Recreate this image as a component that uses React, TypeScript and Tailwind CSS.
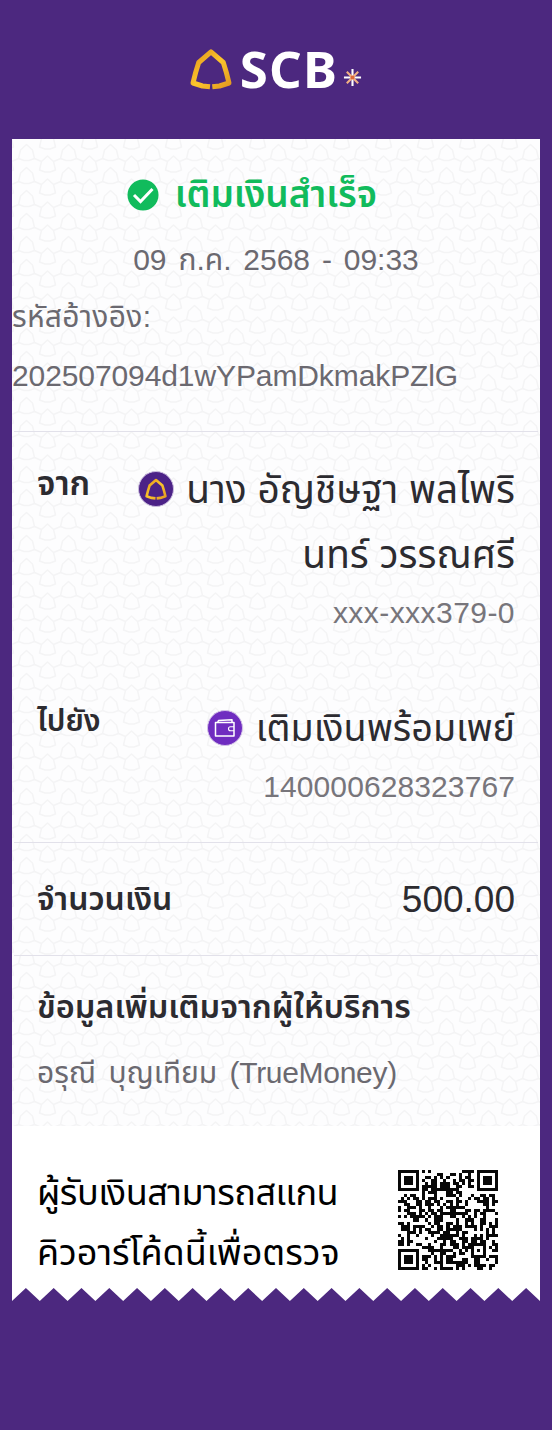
import type { ReactNode } from 'react'

const TEETH = 19
const QR_SIZE = 33

// ─── QR pattern ───────────────────────────────────────────────────────────────

function finderCell(x: number, y: number): boolean | null {
  const origins = [[0, 0], [QR_SIZE - 7, 0], [0, QR_SIZE - 7]]
  for (const [ox, oy] of origins) {
    const dx = x - ox
    const dy = y - oy
    if (dx < -1 || dy < -1 || dx > 7 || dy > 7) continue
    const d = Math.max(Math.abs(dx - 3), Math.abs(dy - 3))
    return d === 3 || d <= 1
  }
  const a = Math.max(Math.abs(x - 26), Math.abs(y - 26))
  if (a <= 2) return a !== 1
  return null
}

function qrPath(): string {
  let seed = 20257
  let d = ''
  for (let y = 0; y < QR_SIZE; y++) {
    for (let x = 0; x < QR_SIZE; x++) {
      seed = (seed * 1103515245 + 12345) % 2147483648
      const on = finderCell(x, y) ?? seed / 2147483648 < 0.5
      if (on) d += `M${x} ${y}h1v1h-1z`
    }
  }
  return d
}

function QrCode() {
  return (
    <svg viewBox="0 0 33 33" className="h-[100px] w-[100px] shrink-0" shapeRendering="crispEdges">
      <path d={qrPath()} fill="#080808" />
    </svg>
  )
}

// ─── Icons ────────────────────────────────────────────────────────────────────

function Leaf({ className }: { className: string }) {
  return (
    <svg viewBox="0 0 42 42" className={className} fill="none">
      <defs>
        <linearGradient id="gold" x1="0" y1="0" x2="1" y2="1">
          <stop offset="0" stopColor="#e2951c" />
          <stop offset=".5" stopColor="#fcc52c" />
          <stop offset="1" stopColor="#e39a20" />
        </linearGradient>
      </defs>
      <path
        d="M20 38.800L12.500 38L3 35Q5.500 24 8.700 14.500L21 3.800L33.300 14.500Q36.500 24 39 35L29.500 38L22.300 38.800"
        stroke="url(#gold)"
        strokeWidth="5"
        strokeLinejoin="round"
      />
    </svg>
  )
}

function Spark() {
  return (
    <svg viewBox="0 0 20 20" className="mt-[20px] ml-[5px] h-[19px] w-[19px]" strokeWidth="2.200">
      <path d="M10 1v18M1 10h18" stroke="#fff" />
      <path d="m4 4 12 12M16 4 4 16" stroke="#f3b183" />
      <circle cx="10" cy="10" r="2.200" fill="#dc6738" />
    </svg>
  )
}

function WalletBadge() {
  return (
    <svg viewBox="0 0 36 36" className="h-9 w-9 shrink-0" fill="none">
      <circle cx="18" cy="18" r="17.500" fill="#6f2cc0" stroke="#d3c2e6" />
      <path
        d="M8.500 12.500h18.500v13.500H8.500zM10.500 12.500l1-2 13.500-.8v2.800"
        stroke="#fff"
        strokeWidth="1.500"
        strokeLinejoin="round"
      />
      <path d="M27 16.800h-3.500q-2 0-2 2t2 2H27" stroke="#fff" strokeWidth="1.100" />
    </svg>
  )
}

function Pattern() {
  return (
    <svg className="absolute top-0 left-0 h-[987px] w-full" fill="none">
      <defs>
        <pattern id="leaves" x="4" y="3" width="42" height="23" patternUnits="userSpaceOnUse">
          <g stroke="#f4f4f5" strokeWidth="1.500" strokeLinejoin="round">
            <path d="M2.500 16.500L4.500 8 10.500 2.500 16.500 8l2 8.500-5.500 2H8zM23.500 5l2-8.500L31.500-9l6 5.500 2 8.500-5.500 2h-5zM23.500 28l2-8.500 6-5.500 6 5.500 2 8.500-5.500 2h-5z" />
            <path d="m18.500 16.500 7 3M37.500 19.500l7-3M-4.500 19.500l7-3" />
          </g>
        </pattern>
      </defs>
      <rect width="100%" height="100%" fill="#fdfdfe" />
      <rect width="100%" height="100%" fill="url(#leaves)" />
    </svg>
  )
}

// ─── Slip ─────────────────────────────────────────────────────────────────────

function Label({ children, className = '' }: { children: ReactNode; className?: string }) {
  return <p className={`leading-[48px] font-semibold ${className}`}>{children}</p>
}

function zigzag(): string {
  let d = 'M0 0'
  for (let i = 0; i < TEETH; i++) d += `L${i * 2} 1L${i * 2 + 1} 0`
  return d + `L${TEETH * 2} 1V0z`
}

export default function App() {
  return (
    <main className="h-[1430px] w-[552px] overflow-hidden bg-[#4c287f] px-3 font-['Liberation_Sans','Noto_Sans_Thai',sans-serif] whitespace-nowrap text-[#2c2b30]">
      <header className="flex h-[139px] items-start justify-center pt-[48px]">
        <Leaf className="mr-[8px] h-[42px] w-[42px]" />
        <span className="-mt-[1px] font-['Noto_Sans',sans-serif] text-[51px] leading-[43px] font-bold tracking-[1.3px] text-white">
          SCB
        </span>
        <Spark />
      </header>

      <section className="relative h-[1149px] bg-white">
        <Pattern />
        <div className="relative">
          <div className="flex h-[292px] flex-col text-[30px] text-[#6b6970]">
            <div className="flex h-[91px] items-center justify-center gap-4 pt-[21px] pr-[48px] text-[#11bb5c]">
              <svg viewBox="0 0 32 32" className="h-8 w-8" fill="none">
                <circle cx="16" cy="16" r="15.500" fill="#11bb5c" />
                <path d="m7 16 6.500 6.500L25.500 10" stroke="#fff" strokeWidth="3" />
              </svg>
              <span className="text-[37px] leading-[60px] font-semibold">เติมเงินสำเร็จ</span>
            </div>
            <p className="h-[58px] text-center leading-[60px] [word-spacing:3.5px]">09 ก.ค. 2568 - 09:33</p>
            <p className="h-[59px] leading-[58px] tracking-[0.3px]">รหัสอ้างอิง:</p>
            <p className="leading-[58px] tracking-[-0.1px]">202507094d1wYPamDkmakPZlG</p>
          </div>

          <div className="mx-0.5 h-[412px] border-y border-[#e2e1ea] px-[23px]">
            <div className="flex h-[237px] justify-between pt-[28px]">
              <Label className="text-[33.500px]">จาก</Label>
              <div className="text-right">
                <div className="-mt-[3px] flex items-start gap-3">
                  <span className="mt-[14px] flex h-9 w-9 items-center justify-center rounded-full border border-[#cbbdde] bg-[#4c2287]">
                    <Leaf className="h-[22px] w-[22px]" />
                  </span>
                  <p className="text-[38.800px] leading-[65px]">
                    นาง อัญชิษฐา พลไพริ<br />นทร์ วรรณศรี
                  </p>
                </div>
                <p className="pt-px text-[30px] leading-[50px] tracking-[0.45px] text-[#77757b]">xxx-xxx379-0</p>
              </div>
            </div>
            <div className="flex justify-between pt-[28px]">
              <Label className="text-[30px]">ไปยัง</Label>
              <div className="text-right">
                <div className="flex items-center justify-end gap-[13px]">
                  <WalletBadge />
                  <p className="text-[37.700px] leading-[62px]">เติมเงินพร้อมเพย์</p>
                </div>
                <p className="text-[30px] leading-[56px] tracking-[0.1px] text-[#77757b]">140000628323767</p>
              </div>
            </div>
          </div>

          <div className="mx-0.5 flex h-[113px] items-center justify-between border-b border-[#e2e1ea] px-[23px]">
            <Label className="text-[32px]">จำนวนเงิน</Label>
            <p className="pt-[2px] text-[37px]">500.00</p>
          </div>

          <div className="h-[171px] px-[25px] pt-[27px]">
            <Label className="text-[32.500px]">ข้อมูลเพิ่มเติมจากผู้ให้บริการ</Label>
            <p className="mt-3 text-[30px] leading-[60px] text-[#6b6970] [word-spacing:4px]">
              อรุณี บุญเทียม <span className="tracking-[-0.3px]">(TrueMoney)</span>
            </p>
          </div>

          <div className="flex h-[161px] items-start justify-between pt-[43px] pr-[42px] pl-[25px] text-black">
            <p className="-mt-[7px] text-[36px] leading-[60px]">
              <span className="tracking-[-0.5px]">ผู้รับเงินสามารถสแกน</span><br />คิวอาร์โค้ดนี้เพื่อตรวจ
            </p>
            <QrCode />
          </div>
        </div>
      </section>
      <svg viewBox="0 0 38 1" preserveAspectRatio="none" className="block h-[13px] w-full">
        <path d={zigzag()} fill="#fff" />
      </svg>
    </main>
  )
}
